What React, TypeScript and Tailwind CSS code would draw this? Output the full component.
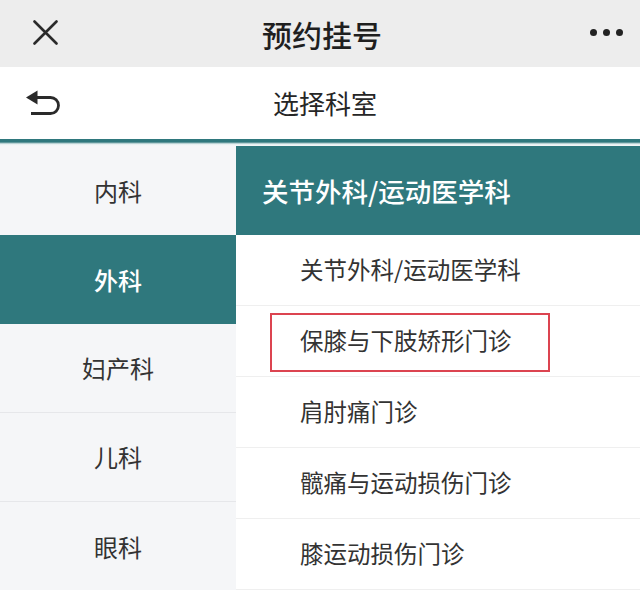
import React from "react";

const leftItems = ["内科", "外科", "妇产科", "儿科", "眼科"];
const subItems = [
  "关节外科/运动医学科",
  "保膝与下肢矫形门诊",
  "肩肘痛门诊",
  "髋痛与运动损伤门诊",
  "膝运动损伤门诊",
];

export default function App() {
  return (
    <div className="w-[640px] h-[590px] overflow-hidden bg-white text-[#262626] font-['Noto_Sans_CJK_SC',sans-serif]">
      {/* top bar */}
      <div className="relative h-[67px] bg-[#ededed] flex items-center justify-center">
        <svg className="absolute left-[33px] top-[20px]" width="25" height="25" viewBox="0 0 25 25">
          <path d="M1.5 1.5 L23.5 23.5 M23.5 1.5 L1.5 23.5" stroke="#2a2a2a" strokeWidth="2.6" strokeLinecap="round" />
        </svg>
        <span className="pl-[4px] text-[30px] font-medium leading-none text-[#1f1f1f]">预约挂号</span>
        <div className="absolute left-[590px] top-[29px] flex gap-[6px]">
          <span className="w-[7px] h-[7px] rounded-full bg-[#222]" />
          <span className="w-[7px] h-[7px] rounded-full bg-[#222]" />
          <span className="w-[7px] h-[7px] rounded-full bg-[#222]" />
        </div>
      </div>
      {/* second bar */}
      <div className="relative h-[72px] bg-white flex items-center justify-center">
        <svg className="absolute left-[25px] top-[23px]" width="36" height="26" viewBox="0 0 36 26">
          <path d="M1 7.5 L12.5 0.5 L12.5 14.5 Z" fill="#2a2a2a" />
          <path d="M11 7.5 H25.5 A8 8 0 0 1 25.5 23.5 H6" fill="none" stroke="#2a2a2a" strokeWidth="2.8" />
        </svg>
        <span className="pl-[10px] text-[26px] leading-none text-[#262626]">选择科室</span>
      </div>
      {/* teal line */}
      <div className="h-[7px] bg-[linear-gradient(180deg,#2f787d_0px,#2f787d_3px,#8fb6b9_4px,#e4eeef_5px,#f7f9fa_7px)]" />
      {/* content */}
      <div className="flex">
        <div className="w-[236px] bg-[#f5f6f8] flex flex-col">
          {leftItems.map((t, i) => {
            const selected = i === 1;
            const showBorder = i >= 2 && i < leftItems.length - 1;
            return (
              <div
                key={t}
                className={
                  selected
                    ? "h-[89px] flex items-center justify-center bg-[#2f787d] text-white text-[24px] font-medium"
                    : showBorder
                    ? "h-[89px] flex items-center justify-center text-[24px] text-[#333] border-b border-[#e6e7ea]"
                    : "h-[89px] flex items-center justify-center text-[24px] text-[#333]"
                }
              >
                {t}
              </div>
            );
          })}
        </div>
        <div className="flex-1 flex flex-col bg-white">
          <div className="h-[89px] bg-[#2f787d] flex items-center pl-[26px] text-white text-[26.5px] font-medium">
            关节外科/运动医学科
          </div>
          {subItems.map((t, i) => (
            <div
              key={t}
              className="relative h-[71px] flex items-center pl-[64px] text-[23.5px] text-[#333] border-b border-[#efefef]"
            >
              {i === 1 && (
                <div className="absolute left-[34px] top-[7px] w-[280px] h-[59px] border-2 border-[#dc4450]" />
              )}
              {t}
            </div>
          ))}
        </div>
      </div>
    </div>
  );
}
